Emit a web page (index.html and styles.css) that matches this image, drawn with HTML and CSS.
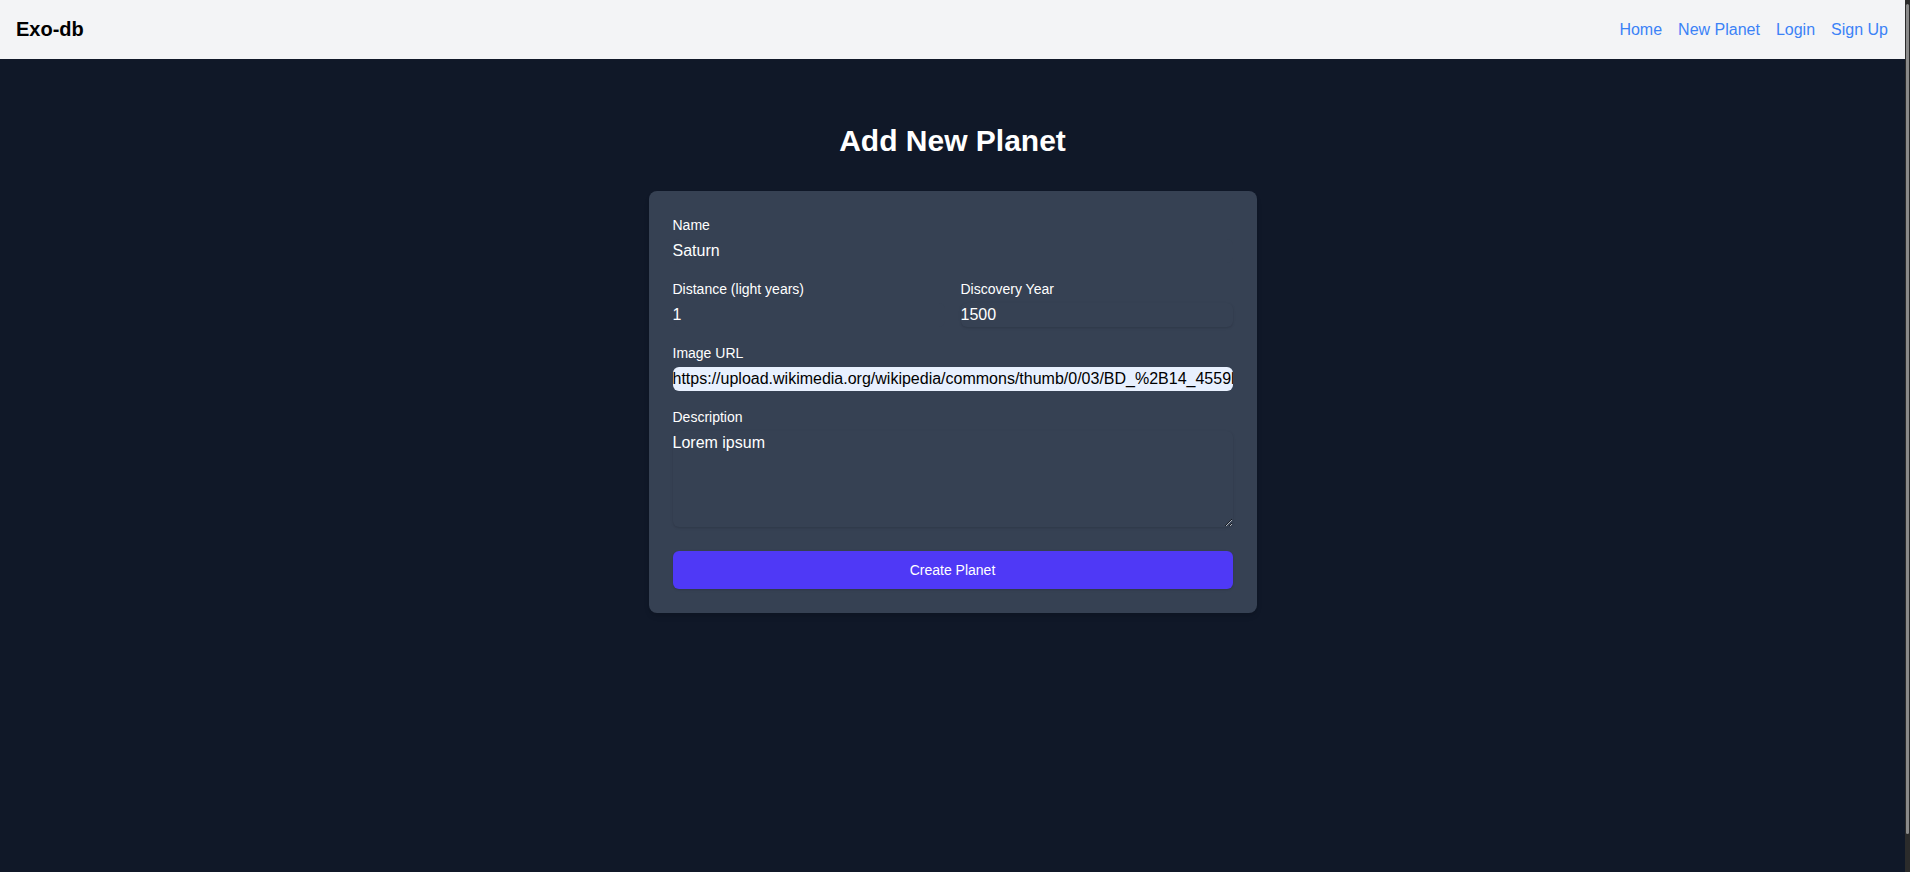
FILE: index.html
```html
<!DOCTYPE html>
<html lang="en">
<head>
<meta charset="utf-8">
<title>Exo-db</title>
<link rel="stylesheet" href="styles.css">
</head>
<body>
<div class="page">
  <nav class="nav">
    <a class="brand" href="#">Exo-db</a>
    <div class="links">
      <a href="#">Home</a>
      <a href="#">New Planet</a>
      <a href="#">Login</a>
      <a href="#">Sign Up</a>
    </div>
  </nav>
  <main class="main">
    <h1 class="title">Add New Planet</h1>
    <form class="card">
      <div class="field">
        <label class="label">Name</label>
        <input class="input" type="text" value="Saturn">
      </div>
      <div class="row">
        <div class="field">
          <label class="label">Distance (light years)</label>
          <input class="input" type="text" value="1">
        </div>
        <div class="field">
          <label class="label">Discovery Year</label>
          <input class="input input-shadow" type="text" value="1500">
        </div>
      </div>
      <div class="field">
        <label class="label">Image URL</label>
        <input class="input autofill" type="text" value="https://upload.wikimedia.org/wikipedia/commons/thumb/0/03/BD_%2B14_4559b_artist_impression.jpg">
      </div>
      <div class="field">
        <label class="label">Description</label>
        <textarea class="input textarea" rows="4">Lorem ipsum</textarea>
      </div>
      <button class="button" type="button">Create Planet</button>
    </form>
  </main>
</div>
<div class="scrollbar"><div class="thumb"></div></div>
</body>
</html>
```
FILE: styles.css
```css
* { box-sizing: border-box; }
html, body { height: 100%; }
body {
  margin: 0;
  display: flex;
  background: #101828;
  font-family: "Liberation Sans", Arial, sans-serif;
  line-height: 1.5;
  overflow: hidden;
}
.page {
  flex: 1;
  display: flex;
  flex-direction: column;
  min-width: 0;
}
.nav {
  height: 59px;
  background: #f3f4f6;
  display: flex;
  align-items: center;
  justify-content: space-between;
  padding: 0 17px 0 16px;
}
.brand {
  font-size: 20px;
  line-height: 28px;
  font-weight: 700;
  color: #000;
  text-decoration: none;
  margin-top: -1px;
}
.links {
  display: flex;
  gap: 16px;
}
.links a {
  font-size: 16px;
  line-height: 24px;
  color: #3b82f6;
  text-decoration: none;
}
.main {
  flex: 1;
  padding-top: 64px;
  display: flex;
  flex-direction: column;
  align-items: center;
}
.title {
  margin: 0 0 32px;
  font-size: 30px;
  line-height: 36px;
  font-weight: 700;
  color: #fff;
}
.card {
  width: 608px;
  background: #364153;
  border-radius: 8px;
  padding: 24px;
  display: flex;
  flex-direction: column;
  gap: 16px;
  box-shadow: 0 4px 6px -1px rgba(0,0,0,0.1), 0 2px 4px -2px rgba(0,0,0,0.1);
}
.row {
  display: grid;
  grid-template-columns: 1fr 1fr;
  gap: 16px;
}
.field {
  display: flex;
  flex-direction: column;
  gap: 4px;
  min-width: 0;
}
.label {
  font-size: 14px;
  line-height: 20px;
  color: #fff;
}
.input {
  display: block;
  width: 100%;
  height: 24px;
  padding: 0;
  border: 0;
  outline: none;
  border-radius: 6px;
  background: #364153;
  color: #fff;
  font-family: "Liberation Sans", Arial, sans-serif;
  font-size: 16px;
  line-height: 24px;
}
.input-shadow {
  box-shadow: 0 1px 3px 0 rgba(0,0,0,0.1), 0 1px 2px -1px rgba(0,0,0,0.1);
}
.autofill {
  background: #e8f0fe;
  color: #000;
}
.textarea {
  height: 96px;
  resize: vertical;
  box-shadow: 0 1px 3px 0 rgba(0,0,0,0.1), 0 1px 2px -1px rgba(0,0,0,0.1);
}
.button {
  margin-top: 8px;
  width: 100%;
  padding: 8px 16px;
  border: 0;
  border-radius: 6px;
  background: #4f39f6;
  color: #fff;
  font-family: "Liberation Sans", Arial, sans-serif;
  font-size: 14px;
  line-height: 22px;
  box-shadow: 0 1px 3px 0 rgba(0,0,0,0.1), 0 1px 2px -1px rgba(0,0,0,0.1);
  cursor: pointer;
}
.scrollbar {
  width: 5px;
  background: #2b2b2b;
  padding: 4px 1px 38px 1px;
  display: flex;
}
.thumb {
  flex: 1;
  background: #8a8a8a;
  border-radius: 2px;
}
```
